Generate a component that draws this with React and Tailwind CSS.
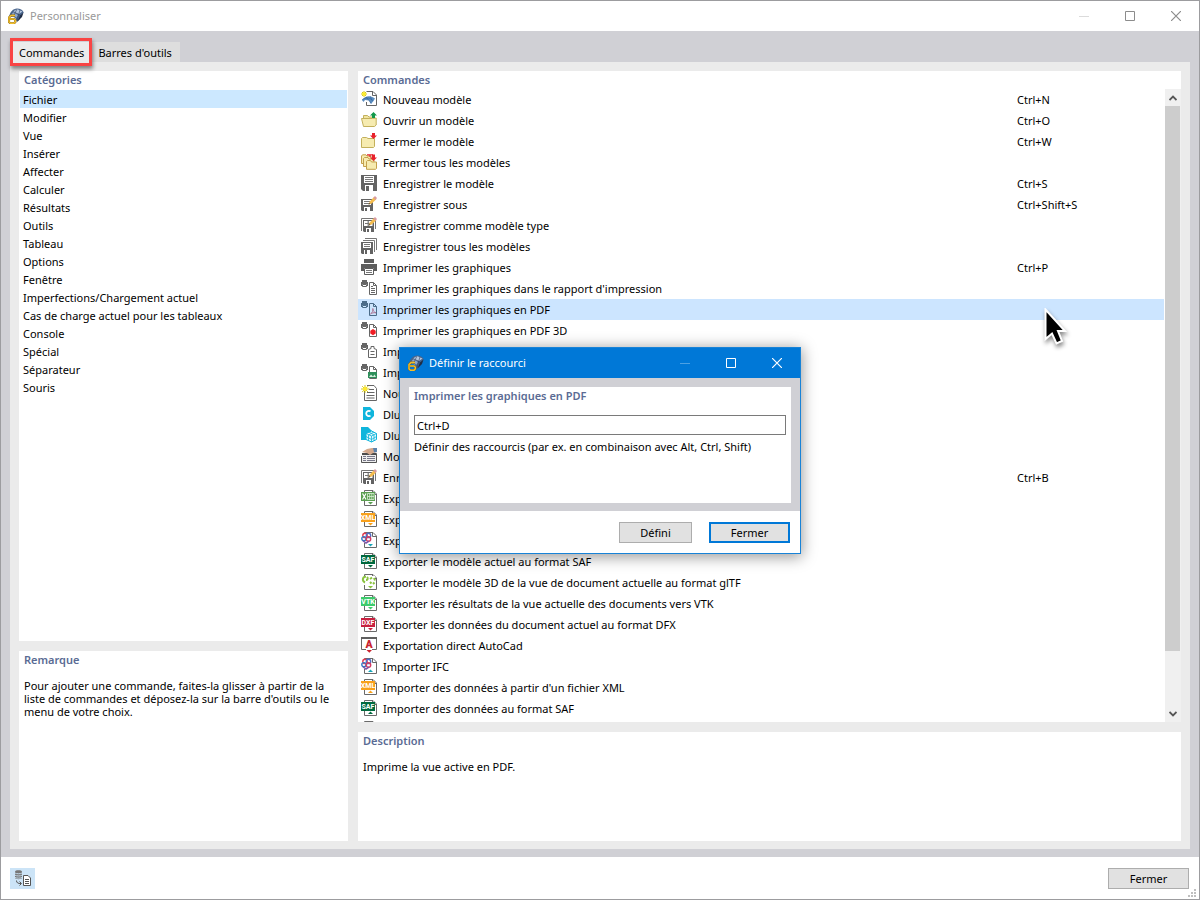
import React from 'react';
import clsx from 'clsx';

const categories = [
  'Fichier',
  'Modifier',
  'Vue',
  'Insérer',
  'Affecter',
  'Calculer',
  'Résultats',
  'Outils',
  'Tableau',
  'Options',
  'Fenêtre',
  'Imperfections/Chargement actuel',
  'Cas de charge actuel pour les tableaux',
  'Console',
  'Spécial',
  'Séparateur',
  'Souris',
];

const commands = [
  { icon: <NewModelIcon />, name: 'Nouveau modèle', keys: 'Ctrl+N' },
  { icon: <OpenIcon />, name: 'Ouvrir un modèle', keys: 'Ctrl+O' },
  { icon: <CloseModelIcon />, name: 'Fermer le modèle', keys: 'Ctrl+W' },
  { icon: <CloseAllIcon />, name: 'Fermer tous les modèles' },
  { icon: <SaveIcon />, name: 'Enregistrer le modèle', keys: 'Ctrl+S' },
  { icon: <SaveAsIcon />, name: 'Enregistrer sous', keys: 'Ctrl+Shift+S' },
  { icon: <SaveTemplateIcon />, name: 'Enregistrer comme modèle type' },
  { icon: <SaveAllIcon />, name: 'Enregistrer tous les modèles' },
  { icon: <PrinterIcon />, name: 'Imprimer les graphiques', keys: 'Ctrl+P' },
  { icon: <PrintToIcon kind="report" />, name: "Imprimer les graphiques dans le rapport d'impression" },
  { icon: <PrintToIcon kind="pdf" />, name: 'Imprimer les graphiques en PDF', selected: true },
  { icon: <PrintToIcon kind="pdf3d" />, name: 'Imprimer les graphiques en PDF 3D' },
  { icon: <PrintToIcon kind="clipboard" />, name: 'Imprimer dans le presse-papiers' },
  { icon: <PrintToIcon kind="image" />, name: 'Imprimer en image' },
  { icon: <NewReportIcon />, name: 'Nouveau rapport' },
  { icon: <CenterIcon />, name: 'Dlubal Center' },
  { icon: <BlocksIcon />, name: 'Dlubal Center | Blocs' },
  { icon: <TemplatesIcon />, name: 'Modèles types' },
  { icon: <SaveTemplateIcon />, name: 'Enregistrer comme bloc', keys: 'Ctrl+B' },
  { icon: <FileBadgeIcon label="X" color="#5a9e50" grid />, name: 'Exporter vers Excel' },
  { icon: <FileBadgeIcon label="XML" color="#f9a11b" />, name: 'Exporter vers XML' },
  { icon: <IfcIcon />, name: 'Exporter IFC' },
  { icon: <FileBadgeIcon label="SAF" color="#00693e" />, name: 'Exporter le modèle actuel au format SAF' },
  { icon: <GltfIcon />, name: 'Exporter le modèle 3D de la vue de document actuelle au format glTF' },
  { icon: <FileBadgeIcon label="VTK" color="#3ecb6c" />, name: 'Exporter les résultats de la vue actuelle des documents vers VTK' },
  { icon: <FileBadgeIcon label="DXF" color="#c8203f" />, name: 'Exporter les données du document actuel au format DFX' },
  { icon: <AutocadIcon />, name: 'Exportation direct AutoCad' },
  { icon: <IfcIcon up />, name: 'Importer IFC' },
  { icon: <FileBadgeIcon label="XML" color="#f9a11b" up />, name: "Importer des données à partir d'un fichier XML" },
  { icon: <FileBadgeIcon label="SAF" color="#00693e" up />, name: 'Importer des données au format SAF' },
  { icon: <GltfIcon />, name: '' },
];

function Svg({ children }) {
  return (
    <svg width="16" height="16" viewBox="0 0 16 16" fill="none" aria-hidden="true" className="block shrink-0">
      {children}
    </svg>
  );
}

function AppIcon() {
  return (
    <Svg>
      <path d="M1 9 C2 4 5 .5 9 .5 C12 .5 15 2 15.7 4.5 L13.5 7 L11.5 11.5 L9 14 L7 9 Z" fill="#48648c" />
      <path d="M5 3.5 L9 1 L14.5 3.5 L11 6 L7 5 Z" fill="#b4c6de" />
      <path d="M2.5 7.5 L5.5 4 L10 7 L8 10.5 Z" fill="#8fa6c6" />
      <path d="M5 3.5 L11 6.5 L13 8 M3 6.5 L8.5 10 M9 1 L7 5 L6 8 M12 2 L10.5 7 L9 13" stroke="#2b3f62" strokeWidth=".6" />
      <path d="M12 7.5 L15.5 4.5 L14 9 L9.5 13.5 Z" fill="#202d45" />
      <path d="M7 7.5 H3 L1 9.5 V14 L2.5 15.3 H6 L7.3 14 V12 L6 11 H2" stroke="#7a5b14" strokeWidth="2.2" />
      <path d="M7 7.5 H3 L1 9.5 V14 L2.5 15.3 H6 L7.3 14 V12 L6 11 H2" stroke="#f0be2c" strokeWidth="1.5" />
    </Svg>
  );
}

function NewModelIcon() {
  return (
    <Svg>
      <path d="M5.5 .5 H12 L15.5 4 V14.5 H5.5 V11" stroke="#666" fill="#fff" />
      <path d="M11.5 .5 V4.5 H15.5" stroke="#666" />
      <path d="M1 9 C4 4.5 9 4 14 7.5 L12.5 10 L10 13 L8 9.5 L4 9 L2.5 11 Z" fill="#5b8dc0" />
      <path d="M1 9 C4 6.5 8 6 11 9 M5 6 L8.5 10 L10 12.5 M9 5 L11.5 10" stroke="#2d5d94" strokeWidth=".6" />
      <path d="M3 0 V6 M0 3 H6 M1 1 L5 5 M5 1 L1 5" stroke="#d0bf00" strokeWidth=".9" />
      <circle cx="3" cy="3" r="1.8" fill="#ffee22" />
    </Svg>
  );
}

function OpenIcon() {
  return (
    <Svg>
      <path d="M2.5 13 V3.5 H6.5 L8 5 H13.5 V13" stroke="#c3b05c" fill="#f0e4a0" />
      <path d="M.5 6.5 H11.5 L15.2 6 V13 L13.5 14.5 H2.5 Z" stroke="#c3b05c" fill="#f6ebb0" />
      <path d="M12.5 0 L16 3.5 H14 V6 H11 V3.5 H9 Z" fill="#11984a" />
    </Svg>
  );
}

function CloseModelIcon() {
  return (
    <Svg>
      <path d="M.5 14.5 V5.5 L1.5 4.5 H5.5 L7 5.5 H13.5 V13.5 L12.5 14.5 Z" stroke="#c3b05c" fill="#f6ebb0" />
      <path d="M12.5 6 L16 2.5 H14 V0 H11 V2.5 H9 Z" fill="#e8212b" />
    </Svg>
  );
}

function CloseAllIcon() {
  return (
    <Svg>
      <path d="M.5 9.5 V2 L1.5 .8 H5 L6 2 H10 V9.5 Z" stroke="#c3a04c" fill="#f6ebb0" />
      <path d="M2.5 12.5 V4.5 L3.5 3.5 H7 L8 5 H13 V12.5 Z" stroke="#c3a04c" fill="#f6ebb0" />
      <path d="M5.5 15.3 V7.5 L6.5 6.5 H9.5 L10.5 8 H15.5 V14.5 L14.5 15.3 Z" stroke="#c3a04c" fill="#f6ebb0" />
      <path d="M12.5 7 L16 3.5 H14 V.5 H11 V3.5 H9 Z" fill="#e8212b" />
      <path d="M6 .8 H9 V3 M9 .8 H12" stroke="#e8212b" strokeWidth="1.2" />
    </Svg>
  );
}

function SaveIcon() {
  return (
    <Svg>
      <path d="M0 0 H16 V16 H2 L0 14 Z" fill="#636363" />
      <path d="M3 1 H13 V8 H3 Z" fill="#fff" />
      <path d="M4 2.5 H12 M4 4.5 H12 M4 6.5 H12" stroke="#777" />
      <path d="M4 10 H12 V16 H4 Z" fill="#fff" />
      <path d="M5 11 H8 V16 H5 Z" fill="#636363" />
    </Svg>
  );
}

function Pencil() {
  return (
    <>
      <path d="M7.5 8.5 L8.8 5.5 L13 1 L15.3 3.3 L10.8 7.5 Z" fill="#f5bd4f" />
      <path d="M12.4 1.8 L14 0 L16 2 L14.5 4 Z" fill="#d79aa0" />
      <path d="M7.5 8.5 L8.2 6.8 L9.5 8 Z" fill="#554a40" />
    </>
  );
}

function SaveAsIcon() {
  return (
    <Svg>
      <path d="M0 3 H12 V15 H1 L0 14 Z" fill="#636363" />
      <path d="M2 4 H10 V9 H2 Z" fill="#fff" />
      <path d="M3 5.5 H9 M3 7.5 H8" stroke="#777" />
      <path d="M3 11 H9 V15 H3 Z" fill="#fff" />
      <path d="M4 12 H6 V15 H4 Z" fill="#636363" />
      <Pencil />
    </Svg>
  );
}

function SaveTemplateIcon() {
  return (
    <Svg>
      <path d="M.5 14 V1.5 H14.5 V12" stroke="#777" />
      <path d="M2 3 H13 V15 H3 L2 14 Z" fill="#636363" />
      <path d="M3 4 H11.5 V9 H3 Z" fill="#fff" />
      <path d="M7.2 4 V9 M4 6.5 H11" stroke="#777" strokeWidth="1.2" />
      <path d="M5 11 H10 V15 H5 Z" fill="#fff" />
      <path d="M6 12 H8 V15 H6 Z" fill="#636363" />
      <Pencil />
    </Svg>
  );
}

function SaveAllIcon() {
  return (
    <Svg>
      <path d="M4 .5 H15.5 V12 M2 2.5 H13.5 V14" stroke="#777" />
      <path d="M0 4 H12 V16 H1 L0 15 Z" fill="#636363" />
      <path d="M2 5 H10 V10 H2 Z" fill="#fff" />
      <path d="M3 6.5 H9 M3 8.5 H9" stroke="#777" />
      <path d="M3 12 H9 V16 H3 Z" fill="#fff" />
      <path d="M4 12 H6 V16 H4 Z" fill="#636363" />
    </Svg>
  );
}

function PrinterIcon() {
  return (
    <Svg>
      <path d="M3 0 H13 V4 H3 Z M0 5 H16 V12 H13 V9 H3 V12 H0 Z" fill="#5d5d5d" />
      <path d="M3.5 9.5 H12.5 V15.5 H3.5 Z" fill="#fff" stroke="#5d5d5d" />
      <path d="M5 11.5 H11 M5 13.5 H11" stroke="#777" />
    </Svg>
  );
}

function PrintToIcon({ kind }) {
  const blue = kind === 'pdf';
  const ink = blue ? '#4a6b88' : '#666';
  return (
    <Svg>
      <path d="M1 0 H6 V2 H7 V6 H6 V4 H1 V6 H0 V2 H1 Z" fill={ink} />
      <path d="M1.5 4.5 H5.5 V6.5 H1.5 Z" fill={blue ? '#cce8ff' : '#fff'} stroke={ink} />
      {kind === 'clipboard' ? (
        <path d="M7.5 14.5 V6.5 L10 5.5 V3.5 H13 V5.5 L15.5 6.5 V14.5 Z M9.5 8.5 H13.5 M9.5 11.5 H13.5" stroke={ink} fill="#fff" />
      ) : (
        <>
          <path d="M8.5 14.5 V2.5 H12.5 L15.5 5.5 V14.5 Z" stroke={ink} fill={blue ? '#cce4fb' : '#fff'} />
          <path d="M12.5 2.5 V5.5 H15.5" stroke={ink} />
        </>
      )}
      {kind === 'report' && <path d="M10 6.5 H12 M10 8.5 H14 M10 10.5 H14 M10 12.5 H14" stroke={ink} />}
      {kind === 'pdf' && <path d="M9.5 13 C11.5 11.5 12.2 9.5 11.8 7.5 C12 10 13.3 11.5 15 11.8 C12.5 11.4 11 12 9.5 13" stroke="#a86e8e" strokeWidth=".9" />}
      {kind === 'pdf3d' && <path d="M12 7 L14.7 8.8 V11.5 L12 13.2 L9.3 11.5 V8.8 Z" fill="#f01c24" />}
      {kind === 'image' && (
        <>
          <path d="M7 8 H16 V14 H7 Z" fill="#2f8f5b" />
          <path d="M8 13 L10 10.5 L12 12.5 L13.5 10.5 L15 13 Z" fill="#d8f0e0" />
        </>
      )}
    </Svg>
  );
}

function NewReportIcon() {
  return (
    <Svg>
      <path d="M3.5 6 V15.5 H15.5 V3.5 L13 .5 H6" stroke="#666" fill="#fff" />
      <path d="M8 4.5 H13 M6 7.5 H13.5 M5.5 10.5 H13.5 M5.5 13 H13.5" stroke="#666" />
      <path d="M4 0 V8 M0 4 H8.5 M1.2 1.2 L7 7 M7 1.2 L1.2 7" stroke="#d0bf00" strokeWidth=".9" />
      <circle cx="4" cy="4" r="2" fill="#ffe92b" />
    </Svg>
  );
}

function CenterIcon() {
  return (
    <Svg>
      <path d="M2 1 H9 L13 5 V10 L9 14 H2 Z" fill="#10b5dc" />
      <path d="M9.5 5.4 C8 4.2 5.2 5.2 5.2 7.5 C5.2 9.8 8 10.8 9.5 9.6" stroke="#fff" strokeWidth="1.8" />
    </Svg>
  );
}

function BlocksIcon() {
  return (
    <Svg>
      <path d="M0 0 H7 L11 4 V11 L8 13 H0 Z" fill="#10b5dc" />
      <path d="M10.5 4 L15.5 6.5 V12.5 L10.5 15 L5 12.5 V6.5 Z" fill="#e4f7fc" stroke="#10b5dc" />
      <path d="M5 6.5 L10.5 9 L15.5 6.5 M10.5 9 V15 M8 5 L13 8 V14 M13 5 L7.5 8 V14 M5 9.5 L10.5 12.5 L15.5 9.5" stroke="#10b5dc" strokeWidth=".8" />
    </Svg>
  );
}

function TemplatesIcon() {
  return (
    <Svg>
      <path d="M1.5 5.5 H15.5 V14.5 H.5 V8" fill="#eee" stroke="#555" />
      <path d="M1 5 H15 V7 H1 Z" fill="#4c4c4c" />
      <path d="M2 8.5 H5 M6 8.5 H14 M2 10.5 H5 M6 10.5 H14 M2 12.5 H5 M6 12.5 H14" stroke="#778" />
      <path d="M1 4 L6 1 L11 0 L16 0 V4 L12 5 L9 7 L6 5 Z" fill="#d4a98c" />
      <path d="M12 0 H16 V4 L13 4.5 Z" fill="#5d83ac" />
    </Svg>
  );
}

function Arrow({ up, color }) {
  return <path d={up ? 'M7 14 H12 L9.5 11.5 Z' : 'M7 12 H12 L9.5 14.5 Z'} fill={color} />;
}

function FileOutline() {
  return (
    <>
      <path d="M3.5 .5 H12 L15.5 4 V15.5 H3.5 Z" fill="#fff" stroke="#6a6a6a" />
      <path d="M11.5 .5 V4.5 H15.5" stroke="#6a6a6a" />
    </>
  );
}

function FileBadgeIcon({ label, color, up, grid }) {
  return (
    <Svg>
      <FileOutline />
      <path d="M0 2 H14 V11 H0 Z" fill={color} />
      {grid ? (
        <>
          <path d="M1.5 3.5 L5 9.5 M5 3.5 L1.5 9.5" stroke="#fff" strokeWidth="1.2" />
          <path d="M6.5 3.5 H13 V9.5 H6.5 Z M6.5 6.5 H13 M8.7 3.5 V9.5 M10.8 3.5 V9.5" stroke="#d9efd6" strokeWidth=".8" />
        </>
      ) : (
        <text x="7" y="9" textAnchor="middle" fontSize="7" fontWeight="700" fontFamily="Roboto, sans-serif" fill="#fff">
          {label}
        </text>
      )}
      <Arrow up={up} color={color} />
    </Svg>
  );
}

function IfcIcon({ up }) {
  return (
    <Svg>
      <FileOutline />
      <path d="M1 1.5 H10 V11 H1 Z" fill="#fff" />
      <circle cx="4" cy="3.4" r="2.2" stroke="#e33b51" strokeWidth="1.4" />
      <circle cx="7.5" cy="3.4" r="2.2" stroke="#4f6fc4" strokeWidth="1.4" />
      <circle cx="2.9" cy="6.7" r="2.1" stroke="#347bc8" strokeWidth="1.4" />
      <circle cx="7.5" cy="7" r="2.2" stroke="#d43c62" strokeWidth="1.4" />
      <path d="M2 8.7 L5 11.2 L8 9.2" stroke="#7b53a6" strokeWidth="1.4" />
      <Arrow up={up} color="#17a5b8" />
    </Svg>
  );
}

function GltfIcon() {
  return (
    <Svg>
      <FileOutline />
      <path d="M0 2 H14 V11 H0 Z" fill="#fff" />
      <path d="M5 2.5 C1 3 1 7 4 8.5 M6 3 C7.5 4.5 6.5 6 5 6" stroke="#8ac33f" strokeWidth="2" />
      <path d="M9 5 L11 3.5 M13 4 L14 6.5 M9 8 L10.5 9.5 M13.5 8.5 L12 10" stroke="#8ac33f" strokeWidth="2" />
      <Arrow color="#8ac33f" />
    </Svg>
  );
}

function AutocadIcon() {
  return (
    <Svg>
      <path d="M.5 .5 H15.5 V12.5 H.5 Z" fill="#fff" stroke="#6a6a6a" />
      <path d="M0 0 H16 V2 H0 Z" fill="#5f5f5f" />
      <text x="8" y="10.5" textAnchor="middle" fontSize="10.5" fontWeight="900" fontFamily="Roboto, sans-serif" fill="#c9232d">
        A
      </text>
      <path d="M5 12 H11 V13 H5 Z" fill="#fff" />
      <path d="M5.5 13 H11 L8.3 15.8 Z" fill="#c9232d" />
    </Svg>
  );
}

function DatabaseFileIcon() {
  return (
    <Svg>
      <path d="M0 1.5 C0 -.3 7 -.3 7 1.5 V8 C7 9.5 0 9.5 0 8 Z" fill="#777" />
      <path d="M0 3 C1.5 4 5.5 4 7 3 M0 5.2 C1.5 6.2 5.5 6.2 7 5.2 M0 7.4 C1.5 8.4 5.5 8.4 7 7.4" stroke="#cce4f7" strokeWidth=".9" />
      <path d="M1.5 10.5 C1.5 13 3 13.5 6 13.5 M4.5 11.5 L6.5 13.5 L4.5 15.5" stroke="#555" />
      <path d="M8.5 5.5 H13 L15.5 8 V15.5 H8.5 Z" fill="#fff" stroke="#555" />
      <path d="M10 9.5 H14 M10 11.5 H14 M10 13.5 H14" stroke="#555" />
    </Svg>
  );
}

function WindowControls({ dark }) {
  return (
    <div className={clsx('flex h-full', dark ? 'text-white' : 'text-[#8c8c8c]')}>
      <button type="button" aria-label="Réduire" className="flex w-[46px] items-center justify-center">
        <svg width="10" height="10" viewBox="0 0 10 10" className="opacity-30">
          <path d="M0 5.5 H10" stroke="currentColor" />
        </svg>
      </button>
      <button type="button" aria-label="Agrandir" className="flex w-[46px] items-center justify-center">
        <svg width="10" height="10" viewBox="0 0 10 10" fill="none">
          <path d="M.5 .5 H9.5 V9.5 H.5 Z" stroke="currentColor" />
        </svg>
      </button>
      <button type="button" aria-label="Fermer la fenêtre" className="flex w-[46px] items-center justify-center">
        <svg width="10" height="10" viewBox="0 0 10 10">
          <path d="M0 0 L10 10 M10 0 L0 10" stroke="currentColor" strokeWidth="1.2" />
        </svg>
      </button>
    </div>
  );
}

function Panel({ title, className, children }) {
  return (
    <section className={clsx('flex min-h-0 flex-col bg-white', className)}>
      <h2 className="h-[18px] shrink-0 px-[5px] font-semibold leading-[18px] text-[#5a6b94]">{title}</h2>
      {children}
    </section>
  );
}

function Scrollbar() {
  return (
    <div className="flex w-4 shrink-0 flex-col bg-[#f0f0f0]">
      <button type="button" aria-label="Défiler vers le haut" className="flex h-[17px] items-center justify-center">
        <svg width="8" height="6" viewBox="0 0 8 6" fill="none">
          <path d="M.5 5 L4 1.5 L7.5 5" stroke="#555" strokeWidth="1.8" />
        </svg>
      </button>
      <div className="flex-1">
        <div className="mr-px h-[91%] bg-[#cdcdcd]" />
      </div>
      <button type="button" aria-label="Défiler vers le bas" className="flex h-[17px] items-center justify-center">
        <svg width="8" height="6" viewBox="0 0 8 6" fill="none">
          <path d="M.5 1 L4 4.5 L7.5 1" stroke="#555" strokeWidth="1.8" />
        </svg>
      </button>
    </div>
  );
}

function CommandTable() {
  return (
    <div className="flex min-h-0 flex-1">
      <div className="min-w-0 flex-1 overflow-hidden pr-px">
        <table className="w-full table-fixed border-collapse">
          <colgroup>
            <col />
            <col className="w-[147px]" />
          </colgroup>
          <tbody>
            {commands.map((cmd, i) => (
              <tr key={i} className={clsx('h-[21px]', cmd.selected && 'bg-[#cce5ff]')}>
                <td className="p-0 pl-[3px]">
                  <div className="flex h-[21px] items-center gap-[6px] whitespace-nowrap">
                    <span className="pb-px">{cmd.icon}</span>
                    <span>{cmd.name}</span>
                  </div>
                </td>
                <td className="p-0">{cmd.keys}</td>
              </tr>
            ))}
          </tbody>
        </table>
      </div>
      <Scrollbar />
    </div>
  );
}

function ShortcutDialog() {
  return (
    <div className="absolute inset-0 flex items-center justify-center pt-px">
      <div
        role="dialog"
        aria-labelledby="dialog-title"
        className="w-[402px] border border-[#1883d7] bg-white shadow-[0_2px_14px_1px_rgba(0,0,0,0.4)]"
      >
        <header className="flex h-[30px] items-center justify-between bg-[#0078d7] pl-2 text-white">
          <div className="flex items-center gap-[5px]">
            <AppIcon />
            <span id="dialog-title" className="pb-[2px]">Définir le raccourci</span>
          </div>
          <WindowControls dark />
        </header>
        <div className="bg-[#d0d0d5] px-[9px] pb-2 pt-[9px]">
          <div className="h-[116px] bg-white px-[5px]">
            <label htmlFor="shortcut" className="block h-7 font-semibold leading-[18px] text-[#5a6b94]">
              Imprimer les graphiques en PDF
            </label>
            <input
              id="shortcut"
              type="text"
              defaultValue="Ctrl+D"
              className="block h-5 w-full border border-[#7a7a7a] bg-white px-[2px] outline-none"
            />
            <p className="mt-1 leading-4">Définir des raccourcis (par ex. en combinaison avec Alt, Ctrl, Shift)</p>
          </div>
        </div>
        <footer className="flex h-[42px] items-center justify-end gap-[17px] px-[10px]">
          <button type="button" className="h-[21px] w-[73px] border border-[#adadad] bg-[#e1e1e1]">
            Défini
          </button>
          <button type="button" className="h-[21px] w-[81px] border-2 border-[#0078d7] bg-[#e1e1e1]">
            Fermer
          </button>
        </footer>
      </div>
    </div>
  );
}

function Pointer() {
  return (
    <svg
      width="24"
      height="38"
      viewBox="0 0 24 38"
      aria-hidden="true"
      className="absolute left-[1043px] top-[307px] drop-shadow-[1px_3px_2px_rgba(0,0,0,0.45)]"
    >
      <path d="M1.5 1.5 V31 L8 25.5 L12.5 35.5 L18 33 L14 23 H21 Z" fill="#000" stroke="#fff" strokeWidth="2" />
    </svg>
  );
}

function App() {
  return (
    <div className="relative flex h-screen flex-col overflow-hidden border border-[#9c9c9f] bg-white font-['Noto_Sans','Open_Sans',sans-serif] text-[11px] leading-[13px] text-black">
      <header className="flex h-[30px] shrink-0 items-center justify-between pl-[7px] text-[#999]">
        <div className="flex items-center gap-[6px]">
          <AppIcon />
          <h1 className="pb-[2px]">Personnaliser</h1>
        </div>
        <WindowControls />
      </header>

      <main className="flex min-h-0 flex-1 flex-col bg-[#d0d0d5] px-[9px] pb-2 pt-[11px]">
        <div role="tablist" className="flex h-5 shrink-0">
          <button type="button" role="tab" aria-selected="true" className="relative bg-[#ebebeb] pl-[9px] pr-2">
            Commandes
            {/* Highlight frame around the active tab */}
            <span className="absolute -bottom-1 -top-1 left-0 right-0 border-[3px] border-[#f94444] shadow-[1px_3px_4px_rgba(0,0,0,0.45)]" />
          </button>
          <button type="button" role="tab" aria-selected="false" className="bg-[#dedede] pl-[6px] pr-2">
            Barres d'outils
          </button>
        </div>

        <div className="flex min-h-0 flex-1 gap-[10px] bg-[#ebebeb] px-[9px] pb-2 pt-[9px]">
          <div className="flex w-[329px] shrink-0 flex-col gap-[10px]">
            <Panel title="Catégories" className="flex-1">
              <ul className="px-px pt-px">
                {categories.map((name, i) => (
                  <li key={name} className={clsx('h-[18px] px-[3px] leading-5', i === 0 && 'bg-[#cce8ff]')}>
                    {name}
                  </li>
                ))}
              </ul>
            </Panel>
            <Panel title="Remarque" className="h-[190px]">
              <p className="px-[5px] pt-[10px]">
                Pour ajouter une commande, faites-la glisser à partir de la liste de commandes et déposez-la sur la barre d'outils ou le menu de votre choix.
              </p>
            </Panel>
          </div>

          <div className="flex min-w-0 flex-1 flex-col gap-[10px]">
            <Panel title="Commandes" className="flex-1">
              <CommandTable />
            </Panel>
            <Panel title="Description" className="h-[109px]">
              <p className="px-[5px] pt-[10px]">Imprime la vue active en PDF.</p>
            </Panel>
          </div>
        </div>
      </main>

      <footer className="relative flex h-[42px] shrink-0 items-center justify-between pl-[9px] pr-[10px]">
        <button type="button" aria-label="Importer la configuration" className="flex h-[21px] w-[25px] items-center justify-center bg-[#cce4f7]">
          <DatabaseFileIcon />
        </button>
        <button type="button" className="h-[21px] w-[81px] border border-[#adadad] bg-[#e1e1e1]">
          Fermer
        </button>
        <svg width="8" height="8" viewBox="0 0 8 8" aria-hidden="true" className="absolute bottom-[2px] right-[3px]">
          <path d="M6 0h2v2h-2z M3 3h2v2h-2z M6 3h2v2h-2z M0 6h2v2h-2z M3 6h2v2h-2z M6 6h2v2h-2z" fill="#bfbfbf" />
        </svg>
      </footer>

      <ShortcutDialog />
      <Pointer />
    </div>
  );
}

export default App;
